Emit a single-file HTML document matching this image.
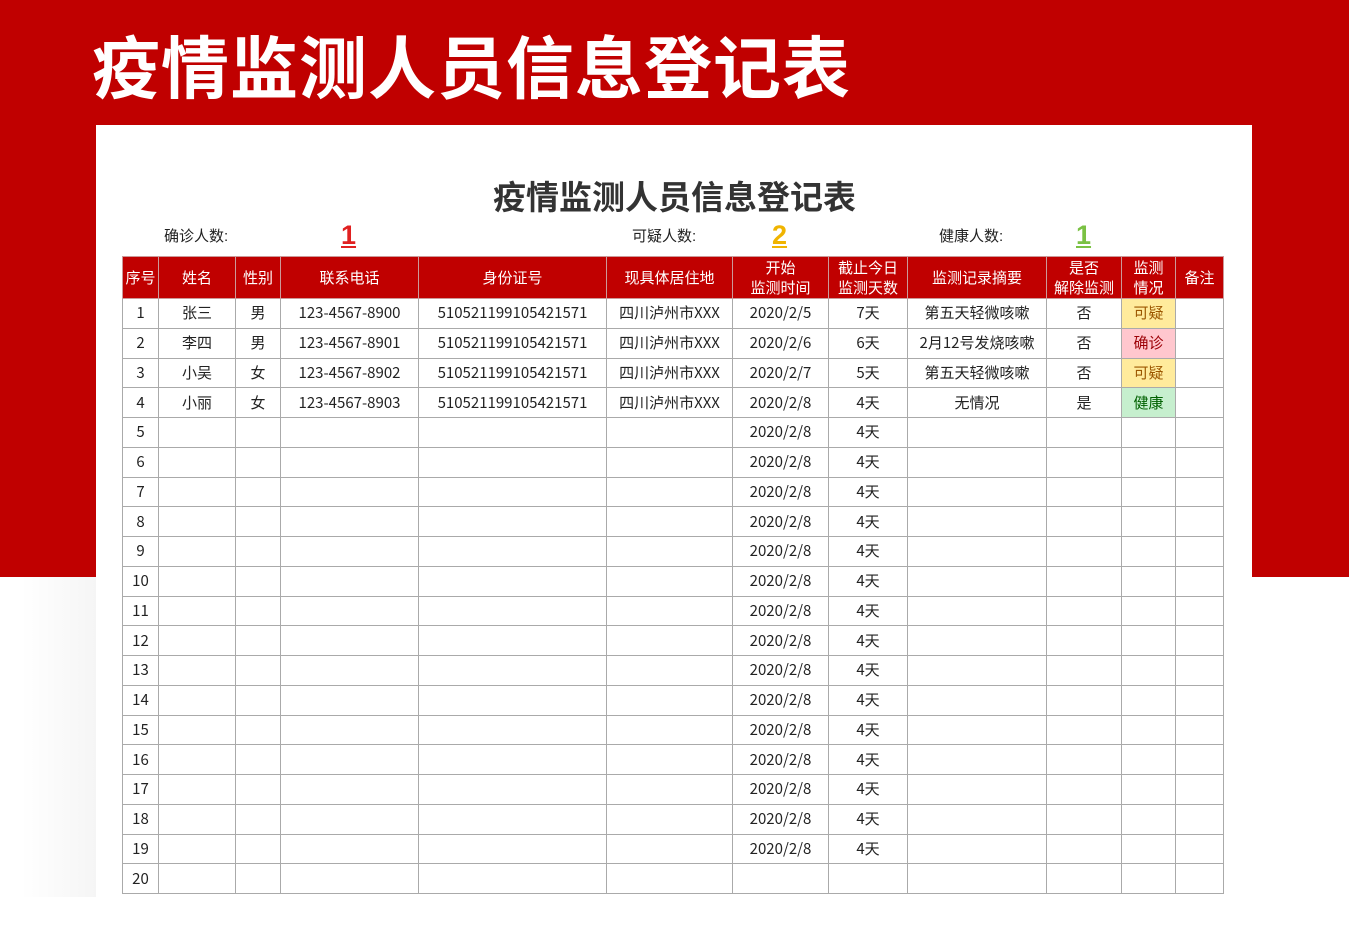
<!DOCTYPE html>
<html><head><meta charset="utf-8"><style>
*{margin:0;padding:0;box-sizing:border-box}
body{width:1349px;height:949px;overflow:hidden;background:#fff;position:relative;font-family:"Liberation Sans","Noto Sans CJK SC",sans-serif;color:#222}
.red{position:absolute;left:0;top:0;width:1349px;height:577px;background:#c00000}
.shadow{position:absolute;left:20px;top:577px;width:76px;height:320px;background:linear-gradient(to right,rgba(0,0,0,0),rgba(0,0,0,0.04))}
.big{position:absolute;left:92px;top:28px;font-size:68px;font-weight:bold;color:#fff;letter-spacing:1px;white-space:nowrap;line-height:84px}
.paper{position:absolute;left:96px;top:125px;width:1156px;height:824px;background:#fff}
.t2{position:absolute;left:0;width:1349px;top:176px;text-align:center;font-size:33px;font-weight:bold;color:#333;line-height:44px}
.lab{position:absolute;font-size:15px;top:225px;color:#222}
.num{position:absolute;font-size:27px;font-weight:bold;top:219px;line-height:32px;text-decoration:underline;text-underline-offset:2px}
table{position:absolute;left:122px;top:256px;border-collapse:collapse;table-layout:fixed;width:1101px}
td{border:1px solid #aaa;text-align:center;font-family:"Noto Sans CJK SC",sans-serif;font-size:15px;line-height:20px;height:29.75px;padding:0;white-space:nowrap;overflow:hidden;vertical-align:middle}
tr.h td{background:#c00000;color:#fff;height:42px;line-height:20px;border-color:#c99;font-size:15px}
.y{background:#ffeb9c;color:#9c5700}.p{background:#ffc7ce;color:#9c0006}.g{background:#c6efce;color:#006100}
</style></head><body>
<div class="red"></div>
<div class="shadow"></div>
<div class="big">疫情监测人员信息登记表</div>
<div class="paper"></div>
<div class="t2">疫情监测人员信息登记表</div>
<div class="lab" style="left:164px">确诊人数:</div>
<div class="num" style="left:341px;color:#e02020">1</div>
<div class="lab" style="left:632px">可疑人数:</div>
<div class="num" style="left:772px;color:#f0b400">2</div>
<div class="lab" style="left:939px">健康人数:</div>
<div class="num" style="left:1076px;color:#7ac143">1</div>
<table>
<colgroup><col style="width:36px"><col style="width:77px"><col style="width:45px"><col style="width:138px"><col style="width:188px"><col style="width:126px"><col style="width:96px"><col style="width:79px"><col style="width:139px"><col style="width:75px"><col style="width:54px"><col style="width:48px"></colgroup>
<tr class="h"><td>序号</td><td>姓名</td><td>性别</td><td>联系电话</td><td>身份证号</td><td>现具体居住地</td><td>开始<br>监测时间</td><td>截止今日<br>监测天数</td><td>监测记录摘要</td><td>是否<br>解除监测</td><td>监测<br>情况</td><td>备注</td></tr>
<tr><td>1</td><td>张三</td><td>男</td><td>123-4567-8900</td><td>510521199105421571</td><td>四川泸州市XXX</td><td>2020/2/5</td><td>7天</td><td>第五天轻微咳嗽</td><td>否</td><td class="y">可疑</td><td></td></tr>
<tr><td>2</td><td>李四</td><td>男</td><td>123-4567-8901</td><td>510521199105421571</td><td>四川泸州市XXX</td><td>2020/2/6</td><td>6天</td><td>2月12号发烧咳嗽</td><td>否</td><td class="p">确诊</td><td></td></tr>
<tr><td>3</td><td>小吴</td><td>女</td><td>123-4567-8902</td><td>510521199105421571</td><td>四川泸州市XXX</td><td>2020/2/7</td><td>5天</td><td>第五天轻微咳嗽</td><td>否</td><td class="y">可疑</td><td></td></tr>
<tr><td>4</td><td>小丽</td><td>女</td><td>123-4567-8903</td><td>510521199105421571</td><td>四川泸州市XXX</td><td>2020/2/8</td><td>4天</td><td>无情况</td><td>是</td><td class="g">健康</td><td></td></tr>
<tr><td>5</td><td></td><td></td><td></td><td></td><td></td><td>2020/2/8</td><td>4天</td><td></td><td></td><td></td><td></td></tr>
<tr><td>6</td><td></td><td></td><td></td><td></td><td></td><td>2020/2/8</td><td>4天</td><td></td><td></td><td></td><td></td></tr>
<tr><td>7</td><td></td><td></td><td></td><td></td><td></td><td>2020/2/8</td><td>4天</td><td></td><td></td><td></td><td></td></tr>
<tr><td>8</td><td></td><td></td><td></td><td></td><td></td><td>2020/2/8</td><td>4天</td><td></td><td></td><td></td><td></td></tr>
<tr><td>9</td><td></td><td></td><td></td><td></td><td></td><td>2020/2/8</td><td>4天</td><td></td><td></td><td></td><td></td></tr>
<tr><td>10</td><td></td><td></td><td></td><td></td><td></td><td>2020/2/8</td><td>4天</td><td></td><td></td><td></td><td></td></tr>
<tr><td>11</td><td></td><td></td><td></td><td></td><td></td><td>2020/2/8</td><td>4天</td><td></td><td></td><td></td><td></td></tr>
<tr><td>12</td><td></td><td></td><td></td><td></td><td></td><td>2020/2/8</td><td>4天</td><td></td><td></td><td></td><td></td></tr>
<tr><td>13</td><td></td><td></td><td></td><td></td><td></td><td>2020/2/8</td><td>4天</td><td></td><td></td><td></td><td></td></tr>
<tr><td>14</td><td></td><td></td><td></td><td></td><td></td><td>2020/2/8</td><td>4天</td><td></td><td></td><td></td><td></td></tr>
<tr><td>15</td><td></td><td></td><td></td><td></td><td></td><td>2020/2/8</td><td>4天</td><td></td><td></td><td></td><td></td></tr>
<tr><td>16</td><td></td><td></td><td></td><td></td><td></td><td>2020/2/8</td><td>4天</td><td></td><td></td><td></td><td></td></tr>
<tr><td>17</td><td></td><td></td><td></td><td></td><td></td><td>2020/2/8</td><td>4天</td><td></td><td></td><td></td><td></td></tr>
<tr><td>18</td><td></td><td></td><td></td><td></td><td></td><td>2020/2/8</td><td>4天</td><td></td><td></td><td></td><td></td></tr>
<tr><td>19</td><td></td><td></td><td></td><td></td><td></td><td>2020/2/8</td><td>4天</td><td></td><td></td><td></td><td></td></tr>
<tr><td>20</td><td></td><td></td><td></td><td></td><td></td><td></td><td></td><td></td><td></td><td></td><td></td></tr>
</table>
</body></html>
